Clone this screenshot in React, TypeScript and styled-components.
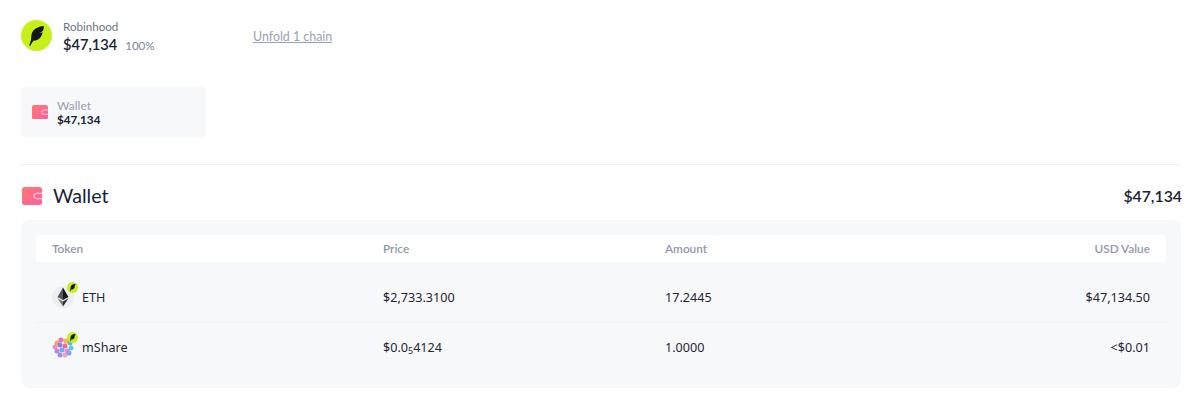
import React from 'react'
import styled, { createGlobalStyle } from 'styled-components'

const GlobalStyle = createGlobalStyle`
  html, body {
    background: #fff;
    margin: 0;
    padding: 0;
  }
  body {
    color: #192234;
    font-family: Lato, "Liberation Sans", sans-serif;
  }
`

const Page = styled.div`
  box-sizing: border-box;
  height: 400px;
  overflow: hidden;
  padding: 20px 18px 0 21px;
  width: 1199px;
`

const ChainRow = styled.div`
  align-items: flex-start;
  display: flex;
  height: 67px;
`

const ChainIcon = styled.div`
  align-items: center;
  background: #c6f01a;
  border-radius: 50%;
  display: flex;
  flex: none;
  height: 31px;
  justify-content: center;
  width: 31px;
`

const ChainInfo = styled.div`
  margin-left: 11px;
  width: 190px;
`

const ChainName = styled.div`
  color: #6a7587;
  font-size: 11.6px;
  line-height: 14px;
`

const ChainValue = styled.div`
  align-items: baseline;
  display: flex;
  gap: 8px;
  margin-top: 1px;
`

const ChainAmount = styled.span`
  font-size: 14.6px;
  font-weight: 600;
  line-height: 20px;
`

const ChainShare = styled.span`
  color: #7b8497;
  font-size: 11.6px;
`

const Unfold = styled.a`
  color: #9aa1b3;
  font-size: 12.4px;
  line-height: 16px;
  margin-top: 9px;
  text-decoration: underline;
`

const SummaryCard = styled.div`
  align-items: center;
  background: #f7f8fa;
  border-radius: 4px;
  box-sizing: border-box;
  display: flex;
  gap: 9px;
  height: 50px;
  padding-left: 11px;
  width: 185px;
`

const CardLabel = styled.div`
  color: #9aa1b3;
  font-size: 12px;
  line-height: 14px;
`

const CardValue = styled.div`
  font-size: 11.7px;
  font-weight: 700;
  line-height: 13px;
`

const Divider = styled.hr`
  background: #eef0f3;
  border: 0;
  height: 1px;
  margin: 27px 0 0;
`

const SectionHead = styled.div`
  align-items: center;
  box-sizing: border-box;
  display: flex;
  height: 55px;
  justify-content: space-between;
  padding-top: 6px;
`

const SectionTitle = styled.div`
  align-items: center;
  display: flex;
  font-size: 19.6px;
  gap: 11px;
  padding-left: 1px;
`

const SectionIcon = styled.span`
  display: flex;
  margin-top: 1px;
`

const SectionTotal = styled.div`
  font-size: 15.8px;
  font-weight: 600;
  margin-right: -1px;
`

const TablePanel = styled.div`
  background: #f7f8fa;
  border-radius: 8px;
  box-sizing: border-box;
  height: 168px;
  padding: 15px;
`

const columns = '331px 282px 1fr 300px'

const HeaderRow = styled.div`
  background: #fff;
  border-radius: 4px;
  color: #9298aa;
  display: grid;
  font-size: 11.8px;
  font-weight: 600;
  grid-template-columns: ${columns};
  height: 27px;
  line-height: 27px;
  margin-bottom: 10px;
  padding: 0 16px;
`

const TokenRow = styled.div`
  align-items: center;
  border-top: ${({ $first }: { $first?: boolean }) =>
    $first ? '0' : '1px solid #f0f2f5'};
  box-sizing: border-box;
  color: #1f2635;
  display: grid;
  font-family: 'Noto Sans', sans-serif;
  font-size: 12.6px;
  grid-template-columns: ${columns};
  height: ${({ $first }: { $first?: boolean }) => ($first ? '50px' : '49px')};
  padding: 0 16px;
`

const TokenCell = styled.div`
  align-items: center;
  display: flex;
  gap: 8px;
`

const TokenIcon = styled.div`
  flex: none;
  height: 22px;
  position: relative;
  width: 22px;
`

const ChainBadge = styled.div`
  align-items: center;
  background: #c6f01a;
  border-radius: 50%;
  display: flex;
  height: 11px;
  justify-content: center;
  position: absolute;
  right: -4px;
  top: -4px;
  width: 11px;
`

const RightCell = styled.div`
  text-align: right;
`

const Zeros = styled.sub`
  font-size: 9px;
  line-height: 0;
  vertical-align: -2px;
`

const Feather = ({ size }: { size: number }) => (
  <svg width={size} height={size} viewBox='0 0 24 24'>
    <path
      d='M19.500 2C15 2.300 10 4.300 7.900 8 6.500 10.500 6.500 13.500 6.400 16 6 18 5.200 20 4.300 22.300l1.300.5C6.500 20.800 7.600 19 8.800 17.500c3-.2 6-1.500 7.800-4.300.9-1.400 1.500-3 1.900-4.700l-3.300 1.200 3.600-2.700C19.400 5.400 19.900 3.600 19.500 2z'
      fill='#14161a'
    />
  </svg>
)

const WalletIcon = ({ size }: { size: number }) => {
  const id = `wallet-${size}`
  return (
    <svg width={size} height={(size * 17) / 19} viewBox='0 0 19 17'>
      <defs>
        <linearGradient id={id} x1='0' y1='0' x2='1' y2='1'>
          <stop offset='0' stopColor='#ff7a6e' />
          <stop offset='1' stopColor='#fc5fa6' />
        </linearGradient>
      </defs>
      <rect width='19' height='17' rx='2.500' fill={`url(#${id})`} />
      <path
        d='M19 6h-5a2.500 2.500 0 0 0 0 5h5'
        fill='none'
        stroke='#ffc4d8'
        strokeWidth='1.200'
      />
    </svg>
  )
}

const EthIcon = () => (
  <svg width='22' height='22' viewBox='0 0 22 22'>
    <circle cx='11' cy='11' r='11' fill='#eceef1' />
    <path d='M11 1.500 5.500 11 11 14z' fill='#55565a' />
    <path d='M11 1.500 16.500 11 11 14z' fill='#17181b' />
    <path d='M5.500 12.200 11 20.500v-5z' fill='#77787c' />
    <path d='M16.500 12.200 11 20.500v-5z' fill='#2b2c30' />
  </svg>
)

const ShareIcon = () => {
  const dots = [
    [5, 7, '#f5a35c'], [9, 4, '#ef6fa8'], [14, 5, '#f0b45c'], [18, 7, '#4fb6e8'],
    [3, 11, '#f48bb7'], [8, 9, '#8f7be8'], [13, 10, '#f06a8f'], [19, 12, '#5fc8e8'],
    [5, 15, '#b388ec'], [10, 14, '#5fb4ee'], [15, 15, '#e98bdc'], [8, 19, '#a48af0'],
    [13, 19, '#f3a0c6'], [17, 17, '#7aa6f2'],
  ] as const
  return (
    <svg width='22' height='22' viewBox='0 0 22 22'>
      {dots.map(([cx, cy, fill]) => (
        <circle key={`${cx}-${cy}`} cx={cx} cy={cy} r='2.500' fill={fill} />
      ))}
    </svg>
  )
}

export default function App() {
  return (
    <>
      <GlobalStyle />
      <Page>
        <ChainRow>
          <ChainIcon>
            <Feather size={23} />
          </ChainIcon>
          <ChainInfo>
            <ChainName>Robinhood</ChainName>
            <ChainValue>
              <ChainAmount>$47,134</ChainAmount>
              <ChainShare>100%</ChainShare>
            </ChainValue>
          </ChainInfo>
          <Unfold>Unfold 1 chain</Unfold>
        </ChainRow>
        <SummaryCard>
          <WalletIcon size={16} />
          <div>
            <CardLabel>Wallet</CardLabel>
            <CardValue>$47,134</CardValue>
          </div>
        </SummaryCard>
        <Divider />
        <SectionHead>
          <SectionTitle>
            <SectionIcon>
              <WalletIcon size={20} />
            </SectionIcon>
            Wallet
          </SectionTitle>
          <SectionTotal>$47,134</SectionTotal>
        </SectionHead>
        <TablePanel>
          <HeaderRow>
            <div>Token</div>
            <div>Price</div>
            <div>Amount</div>
            <RightCell>USD Value</RightCell>
          </HeaderRow>
          <TokenRow $first>
            <TokenCell>
              <TokenIcon>
                <EthIcon />
                <ChainBadge>
                  <Feather size={9} />
                </ChainBadge>
              </TokenIcon>
              ETH
            </TokenCell>
            <div>$2,733.3100</div>
            <div>17.2445</div>
            <RightCell>$47,134.50</RightCell>
          </TokenRow>
          <TokenRow>
            <TokenCell>
              <TokenIcon>
                <ShareIcon />
                <ChainBadge>
                  <Feather size={9} />
                </ChainBadge>
              </TokenIcon>
              mShare
            </TokenCell>
            <div>
              $0.0<Zeros>5</Zeros>4124
            </div>
            <div>1.0000</div>
            <RightCell>&lt;$0.01</RightCell>
          </TokenRow>
        </TablePanel>
      </Page>
    </>
  )
}
